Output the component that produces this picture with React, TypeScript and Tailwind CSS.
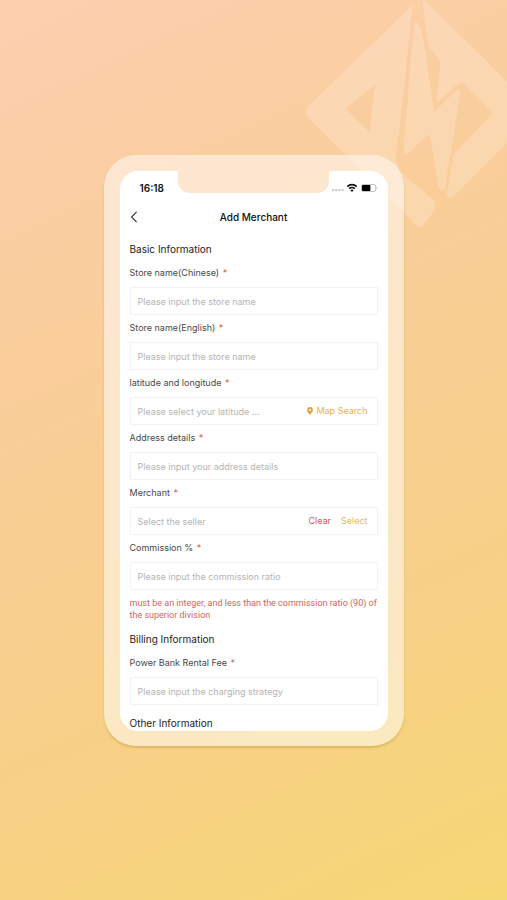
import type { ReactNode } from "react";

function Watermark() {
  return (
    <svg
      className="pointer-events-none absolute top-0 right-0 h-[240px] w-[217px] fill-white/20"
      viewBox="0 0 651 720"
      aria-hidden="true"
    >
      <path
        fillRule="evenodd"
        d="M368 14 L56 318 Q40 335 54 352 L384 680 Q390 685 396 678 L430 638 Q436 630 434 602 L345 528 Q318 500 318 465 L334 340 Z M255 254 L174 318 Q166 326 174 334 L238 396 Z"
      />
      <path d="M380 66 Q372 66 371 80 L340 455 Q341 468 352 462 L412 406 Q420 402 421 412 L446 562 Q455 582 465 566 L512 274 Q510 264 500 270 L432 336 L402 130 Q394 76 380 66 Z" />
      <path d="M396 0 L408 6 L668 262 L668 412 L492 588 Q480 598 470 588 L490 462 L602 348 Q608 340 602 332 L524 252 Q514 244 504 252 L440 310 L452 182 L416 142 Z" />
    </svg>
  );
}

function StatusIcons() {
  return (
    <svg className="h-3 w-[46px]" viewBox="0 0 46 12" aria-label="Wi-Fi and battery" role="img">
      <g fill="#c4c4c4">
        <rect x="0" y="7" width="2" height="2" rx="0.6" />
        <rect x="3.2" y="7" width="2" height="2" rx="0.6" />
        <rect x="6.4" y="7" width="2" height="2" rx="0.6" />
        <rect x="9.6" y="7" width="2" height="2" rx="0.6" />
      </g>
      <g fill="none" stroke="#111" strokeWidth="1.7">
        <path d="M15.3 4.6a6.8 6.8 0 0 1 9.4 0" />
        <path d="M17.2 6.7a4 4 0 0 1 5.6 0" />
      </g>
      <path d="M18.4 8.2a2.3 2.3 0 0 1 3.2 0L20 10Z" fill="#111" />
      <rect x="29.5" y="2.5" width="14.2" height="7" rx="1.6" fill="#fff" stroke="#b5b5b5" strokeWidth="0.8" />
      <rect x="30" y="3" width="8.4" height="6" rx="0.8" fill="#000" />
      <path d="M44.6 4.6q1.4 1.3 0 2.8Z" fill="#999" />
    </svg>
  );
}

function PinIcon() {
  return (
    <svg className="h-2 w-1.5" viewBox="0 0 6 8" aria-hidden="true">
      <path
        fillRule="evenodd"
        fill="#e5a040"
        d="M3 0a2.9 2.9 0 0 1 2.9 2.9C5.9 4.600 4.200 6.200 3 8 1.800 6.200.1 4.600.1 2.900A2.900 2.900 0 0 1 3 0Zm0 1.900a1.100 1.100 0 1 0 0 2.200 1.100 1.100 0 0 0 0-2.200Z"
      />
    </svg>
  );
}

function SectionTitle({ children }: { children: ReactNode }) {
  return <h2 className="text-[10px] leading-4 text-[#222]">{children}</h2>;
}

type FieldProps = {
  id: string;
  label: string;
  placeholder: string;
  children?: ReactNode;
};

function Field({ id, label, placeholder, children }: FieldProps) {
  return (
    <div className="flex flex-col gap-2">
      <label htmlFor={id} className="text-[9px] leading-3 text-[#484848]">
        {label} <span className="ml-px text-[#d9534f]">*</span>
      </label>
      <div className="flex h-7 items-center border border-[#f2f2f2] px-[7px] text-[9px]">
        <input
          id={id}
          type="text"
          placeholder={placeholder}
          className="h-full min-w-0 flex-1 bg-transparent text-[#484848] outline-none placeholder:text-[#b4b4b4]"
        />
        {children}
      </div>
    </div>
  );
}

export default function App() {
  return (
    <main className="relative min-h-screen overflow-hidden bg-[linear-gradient(155deg,#fccfb0_0%,#facd9b_32%,#f7d088_68%,#f6d775_100%)] px-4 py-[155px] font-['Inter','Liberation_Sans',sans-serif]">
      <Watermark />
      <div className="relative mx-auto w-full max-w-[300px] rounded-[32px] bg-white/50 px-4 pt-4 pb-[15px] shadow-[0_2px_2px_rgba(180,130,40,0.35)]">
        <div className="grid h-[34px] grid-cols-[1fr_151px_1fr]">
          <div className="flex items-center rounded-tl-[18px] bg-white pl-5 text-[10px] font-semibold text-[#111]">
            16:18
          </div>
          <div className="overflow-hidden">
            <div className="h-[22px] rounded-b-[12px] shadow-[0_0_0_32px_#fff]" />
          </div>
          <div className="flex items-center rounded-tr-[18px] bg-white pl-[3px]">
            <StatusIcons />
          </div>
        </div>

        <div className="rounded-b-[18px] bg-white px-2.5">
          <header className="grid h-6 grid-cols-[1fr_auto_1fr] items-center">
            <button type="button" aria-label="Back" className="w-2">
              <svg className="h-3 w-2" viewBox="0 0 8 12" fill="none" stroke="#333" strokeWidth="1.1" aria-hidden="true">
                <path d="M6.600 .8 1.600 6l5 5.200" />
              </svg>
            </button>
            <h1 className="text-[10px] leading-4 font-medium text-[#111]">Add Merchant</h1>
          </header>

          <form className="flex flex-col gap-2.5 pt-3">
            <SectionTitle>Basic Information</SectionTitle>
            <div className="flex flex-col gap-[7px]">
              <Field id="name-zh" label="Store name(Chinese)" placeholder="Please input the store name" />
              <Field id="name-en" label="Store name(English)" placeholder="Please input the store name" />
              <Field id="location" label="latitude and longitude" placeholder="Please select your latitude ...">
                <button type="button" className="flex items-center gap-[3px] pr-0.5 text-[#e5b25c]">
                  <PinIcon />
                  Map Search
                </button>
              </Field>
              <Field id="address" label="Address details" placeholder="Please input your address details" />
              <Field id="merchant" label="Merchant" placeholder="Select the seller">
                <div className="flex gap-2.5 pr-0.5">
                  <button type="button" className="text-[#cf5a50]">Clear</button>
                  <button type="button" className="text-[#e5b95f]">Select</button>
                </div>
              </Field>
              <Field id="commission" label="Commission %" placeholder="Please input the commission ratio" />
              <p className="font-[Roboto,sans-serif] text-[9px] leading-3 text-[#cf6660]">
                must be an integer, and less than the commission ratio (90) of the superior division
              </p>
            </div>
            <SectionTitle>Billing Information</SectionTitle>
            <Field id="rental-fee" label="Power Bank Rental Fee" placeholder="Please input the charging strategy" />
            <SectionTitle>Other Information</SectionTitle>
          </form>
        </div>
      </div>
    </main>
  );
}
